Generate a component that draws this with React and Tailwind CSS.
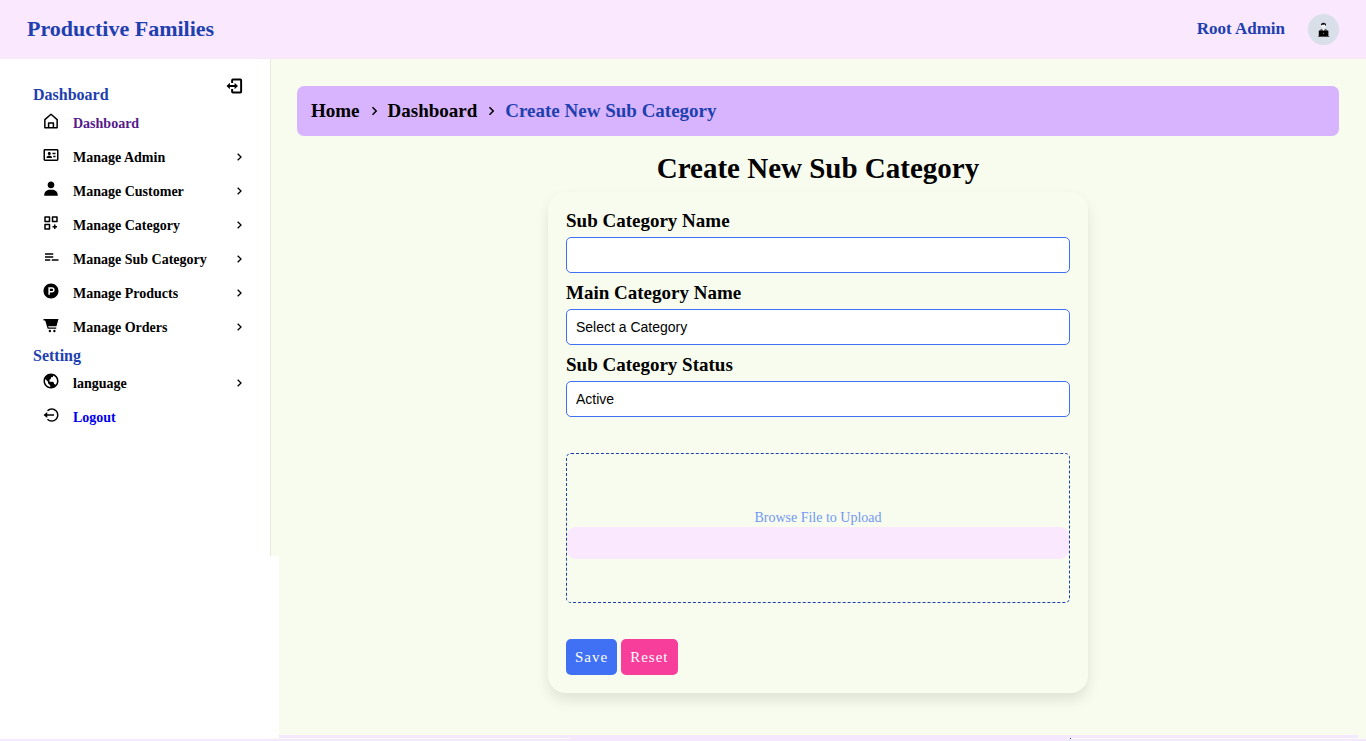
import {
  BiIdCard,
  BiSolidUser,
  BiCustomize,
  BiListMinus,
  BiLogoProductHunt,
  BiWorld,
  BiLogOutCircle,
  BiChevronRight,
} from "react-icons/bi";

function HomeIcon({ className }) {
  return (
    <svg viewBox="0 0 24 24" className={className} fill="none" stroke="currentColor" strokeWidth="2" strokeLinejoin="round" aria-hidden="true">
      <path d="M3.800 21V10.200L12 3l8.200 7.200V21z" />
      <path d="M8.800 21v-6.500h6.400V21" />
    </svg>
  );
}

function CartIcon({ className }) {
  return (
    <svg viewBox="0 0 24 24" className={className} fill="currentColor" aria-hidden="true">
      <path d="M2 4h20l-2.700 9.500H8.200l.7 1.700H19V17H7.600L4.200 6H2z" />
      <circle cx="10.500" cy="20" r="1.600" />
      <circle cx="16.500" cy="20" r="1.600" />
    </svg>
  );
}

function CollapseIcon() {
  return (
    <svg viewBox="0 0 24 24" className="size-[18px]" fill="none" stroke="currentColor" strokeWidth="2.600" aria-hidden="true">
      <path d="M9.500 8V4.300q0-1 1-1h10q1 0 1 1v15.400q0 1-1 1h-10q-1 0-1-1V16" />
      <path d="M5 12h10" />
      <path d="M6.500 7.800v8.400L2 12zM12.800 7.800v8.400l4.500-4.200z" fill="currentColor" stroke="none" />
    </svg>
  );
}

function Avatar() {
  return (
    <svg viewBox="0 0 31 31" className="size-[31px]" role="img" aria-label="Profile">
      <circle cx="15.500" cy="15.500" r="15.500" fill="#d9dfe8" />
      <path d="M11 17.500c.5-2 2-2.500 4.500-2.500s4 .5 4.500 2.500z" fill="#555" />
      <path d="M14 15l1.500 2 1.500-2z" fill="#fff" />
      <circle cx="15.500" cy="12" r="2.300" fill="#f4f4f4" />
      <path d="M13 11.500c-.3-1.800.8-2.700 2.500-2.700s2.900.9 2.500 2.900c-.9-.2-1-.9-1.500-1.200-1 .4-2.600.2-3.500 1z" fill="#111" />
      <path d="M10.800 16.700h9.600v5.300h-9.600z" fill="#000" />
      <path d="M10.200 22h11v.8h-11z" fill="#222" />
      <circle cx="15.600" cy="19.400" r=".6" fill="#777" />
    </svg>
  );
}

const menu = [
  { label: "Dashboard", icon: HomeIcon, color: "text-[#551a8b]" },
  { label: "Manage Admin", icon: BiIdCard, more: true },
  { label: "Manage Customer", icon: BiSolidUser, more: true },
  { label: "Manage Category", icon: BiCustomize, more: true },
  { label: "Manage Sub Category", icon: BiListMinus, more: true },
  { label: "Manage Products", icon: BiLogoProductHunt, more: true },
  { label: "Manage Orders", icon: CartIcon, more: true },
];

const settings = [
  { label: "language", icon: BiWorld, more: true },
  { label: "Logout", icon: BiLogOutCircle, color: "text-[#0000ee]" },
];

function MenuList({ items }) {
  return (
    <ul>
      {items.map(({ label, icon: Icon, color, more }) => (
        <li key={label}>
          <a href="#" className="flex h-[34px] items-center pr-[23px] pl-[42px]">
            <Icon className="mb-1 size-[18px] shrink-0" />
            <span className={`ml-[13px] flex-1 text-[14px] font-bold ${color ?? ""}`}>{label}</span>
            {more && <BiChevronRight className="size-[16px] shrink-0" />}
          </a>
        </li>
      ))}
    </ul>
  );
}

const field =
  "block h-9 w-full appearance-none rounded-[5px] border border-[#4070f4] bg-white px-[9px] font-['Liberation_Sans',sans-serif] text-[14px] text-black";
const labelStyle = "mb-[5px] block text-[19px] leading-[22px] font-bold";

export default function App() {
  return (
    <div className="flex min-h-screen flex-col bg-[#f8fcee] font-['Liberation_Serif',serif] text-black">
      <header className="flex h-[59px] shrink-0 items-center justify-between border-b border-[#f5e6f8] bg-fuchsia-100 px-[27px] text-[#1e40af]">
        <span className="text-[22px] leading-[26px] font-bold">Productive Families</span>
        <div className="flex items-center gap-[23px]">
          <span className="text-[17px] leading-[20px] font-bold">Root Admin</span>
          <Avatar />
        </div>
      </header>

      <div className="flex flex-1">
        <div className="w-[279px] shrink-0 bg-white">
          <div className="flex bg-[#f8fcee]">
            <aside className="h-[497px] w-[271px] border-r border-[#e8ebe0] bg-white pt-[18px]">
              <div className="flex items-start justify-between pr-[27px] pl-[33px] text-[#1e40af]">
                <h2 className="pt-[6px] text-[16px] leading-[23px] font-bold">Dashboard</h2>
                <button type="button" aria-label="Collapse sidebar" className="text-black">
                  <CollapseIcon />
                </button>
              </div>
              <MenuList items={menu} />
              <h2 className="pt-px pl-[33px] text-[16px] leading-[21px] font-bold text-[#1e40af]">Setting</h2>
              <MenuList items={settings} />
            </aside>
          </div>
        </div>

        <main className="flex-1 pt-[27px] pr-[27px] pl-[18px]">
          <nav aria-label="Breadcrumb" className="flex h-[50px] items-center rounded-[7px] bg-[#d8b4fe] px-[14px] text-[19px] font-bold">
            <a href="#">Home</a>
            <BiChevronRight className="mx-[5px] size-[18px]" />
            <a href="#">Dashboard</a>
            <BiChevronRight className="mx-[5px] size-[18px]" />
            <span className="text-[#1e40af]">Create New Sub Category</span>
          </nav>

          <h1 className="mt-[14px] text-center text-[29px] leading-[36px] font-bold">Create New Sub Category</h1>

          <form className="mx-auto mt-[6px] w-full max-w-[540px] rounded-[18px] p-[18px] shadow-[0_7px_14px_rgba(0,0,0,0.1)]">
            <label htmlFor="name" className={labelStyle}>Sub Category Name</label>
            <input id="name" type="text" className={field} />
            <label htmlFor="main" className={`mt-[9px] ${labelStyle}`}>Main Category Name</label>
            <select id="main" className={field}>
              <option>Select a Category</option>
            </select>
            <label htmlFor="status" className={`mt-[9px] ${labelStyle}`}>Sub Category Status</label>
            <select id="status" className={field}>
              <option>Active</option>
              <option>Inactive</option>
            </select>

            <div className="mt-9 h-[150px] rounded-[5px] border border-dashed border-[#1e40af] pt-[55px]">
              <label htmlFor="file" className="block text-center text-[14px] leading-[18px] text-[#7198f5]">
                Browse File to Upload
              </label>
              <input id="file" type="file" className="block h-8 w-full rounded-[9px] bg-fuchsia-100 text-transparent file:hidden" />
            </div>

            <div className="mt-9 flex gap-1 text-[15px] tracking-[1px] text-white">
              <button type="submit" className="h-9 rounded-[5px] bg-[#4070f4] px-[9px]">Save</button>
              <button type="reset" className="h-9 rounded-[5px] bg-[#f73e9b] px-[9px]">Reset</button>
            </div>
          </form>
        </main>
      </div>

      <footer className="shrink-0">
        <div className="flex h-[3px] bg-white">
          <div className="ml-[279px] flex-1 border-r-8 border-[#f8fcee] bg-purple-100" />
        </div>
        <div className="flex h-px">
          <div className="w-[271px] bg-white" />
          <div className="flex-1">
            <div className="mx-auto h-px w-full max-w-[504px] border-r border-[#1e40af] px-[3px]">
              <div className="h-px bg-fuchsia-100" />
            </div>
          </div>
        </div>
        <div className="h-[2px] bg-purple-100" />
      </footer>
    </div>
  );
}
